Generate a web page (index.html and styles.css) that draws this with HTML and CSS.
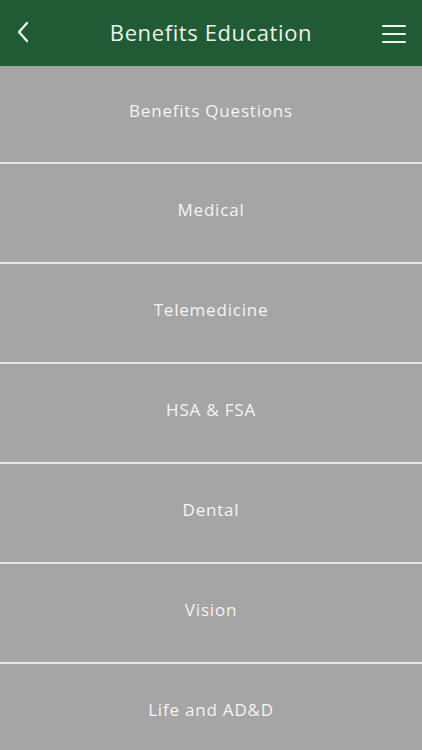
FILE: index.html
```html
<!DOCTYPE html>
<html>
<head>
<meta charset="utf-8">
<link rel="stylesheet" href="styles.css">
</head>
<body>
<header class="topbar">
  <button class="icon-btn back" aria-label="Back">
    <svg width="14" height="22" viewBox="0 0 14 22"><path d="M11 2 L3 11 L11 20" fill="none" stroke="#eef3ee" stroke-width="2.4" stroke-linecap="round" stroke-linejoin="round"/></svg>
  </button>
  <h1 class="title">Benefits Education</h1>
  <button class="icon-btn menu" aria-label="Menu">
    <svg width="26" height="20" viewBox="0 0 26 20"><g stroke="#eef3ee" stroke-width="2.2" stroke-linecap="round"><line x1="2" y1="2" x2="24" y2="2"/><line x1="2" y1="10" x2="24" y2="10"/><line x1="2" y1="18" x2="24" y2="18"/></g></svg>
  </button>
</header>
<main class="list">
  <a class="item first">Benefits Questions</a>
  <a class="item">Medical</a>
  <a class="item">Telemedicine</a>
  <a class="item">HSA &amp; FSA</a>
  <a class="item">Dental</a>
  <a class="item">Vision</a>
  <a class="item">Life and AD&amp;D</a>
</main>
</body>
</html>
```
FILE: styles.css
```css
html, body {
  margin: 0;
  padding: 0;
  background: #a5a5a5;
  font-family: "Open Sans", "Lato", sans-serif;
  overflow: hidden;
}
.topbar {
  height: 66px;
  background: #215b35;
  display: flex;
  align-items: center;
  justify-content: space-between;
  padding: 0 14px 2px 14px;
  box-sizing: border-box;
}
.icon-btn {
  background: none;
  border: 0;
  padding: 0;
  display: flex;
  align-items: center;
  justify-content: center;
  width: 28px;
  height: 30px;
}
.back {
  justify-content: flex-start;
  padding-left: 2px;
}
.menu {
  margin-top: 4px;
}
.title {
  margin: 0;
  font-size: 22px;
  font-weight: 400;
  color: #eaf1ea;
  letter-spacing: 0.6px;
}
.list {
  display: flex;
  flex-direction: column;
}
.item {
  height: 100px;
  box-sizing: border-box;
  display: flex;
  align-items: center;
  justify-content: center;
  color: #f4f4f4;
  font-size: 17px;
  letter-spacing: 0.8px;
  border-top: 2px solid #e6e6e6;
  padding-bottom: 8px;
}
.item.first {
  border-top: 0;
  height: 96px;
}
```
